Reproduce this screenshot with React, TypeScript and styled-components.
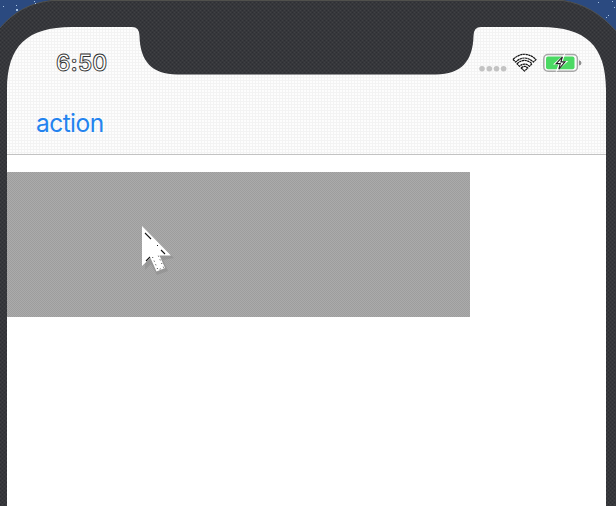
import React from "react";
import styled, { createGlobalStyle } from "styled-components";

const GlobalStyle = createGlobalStyle`
  * { box-sizing: border-box; }
  body {
    margin: 0;
    overflow: hidden;
    background: #fff;
    font-family: Inter, "Liberation Sans", sans-serif;
  }
`;

const Device = styled.div`
  position: relative;
  width: 616px;
  height: 506px;
  padding: 0 10px 0 7px;
  overflow: hidden;
  background: #35363a;
`;

const Screen = styled.main`
  display: flex;
  flex-direction: column;
  height: 506px;
  background: #fff;
`;

const Header = styled.header`
  flex: none;
  height: 155px;
  padding-top: 45px;
  border-bottom: 1px solid #c2c2c2;
  background-color: #f3f3f3;
  background-image: radial-gradient(circle at 1px 1px, #fdfdfd 0.8px, transparent 1.1px);
  background-size: 3px 3px;
`;

const StatusBar = styled.div`
  display: flex;
  align-items: center;
  justify-content: space-between;
  height: 36px;
  padding: 0 24px 0 49px;
`;

const Time = styled.time`
  font-size: 22.5px;
  line-height: 36px;
  font-weight: 600;
  letter-spacing: 0.2px;
  color: #fff;
  -webkit-text-stroke: 0.9px #333;
`;

const StatusIcons = styled.svg`
  display: block;
  width: 104px;
  height: 24px;
`;

const NavigationBar = styled.nav`
  display: flex;
  align-items: center;
  height: 73px;
  padding: 10px 29px 0;
`;

const ActionButton = styled.button`
  padding: 0;
  border: 0;
  background: none;
  color: #2383ef;
  font: 400 24.5px/30px Inter, "Liberation Sans", sans-serif;
  letter-spacing: -0.55px;
`;

const Content = styled.section`
  padding-top: 17px;
`;

const Block = styled.div`
  width: 463px;
  height: 145px;
  background: repeating-conic-gradient(#9d9d9d 0 25%, #ababab 0 50%) 0 0 / 2px 2px;
`;

const Bezel = styled.svg`
  position: absolute;
  inset: 0;
  pointer-events: none;
`;

const Pointer = styled.svg`
  position: absolute;
  left: 136px;
  top: 220px;
  pointer-events: none;
`;

const stars = [[3, 6, 1], [16, 9, 2], [16, 5, 1], [34, 1, 1], [35, 3, 1], [598, 2, 1], [612, 1, 1], [608, 15, 1], [606, 17, 1], [614, 7, 1]];

export default function App() {
  return (
    <Device>
      <GlobalStyle />
      <Screen>
        <Header>
          <StatusBar>
            <Time>6:50</Time>
            <StatusIcons viewBox="478 51 104 24" aria-label="Status">
              <g fill="#c3c3c3">
                {[482, 489.3, 496.5, 503.6].map((x) => <circle key={x} cx={x} cy="68.7" r="2.8" />)}
              </g>
              <g fill="#fff" stroke="#151515" strokeWidth="1.2" strokeDasharray="2.4 0.4" strokeLinejoin="round">
                <path d="M513 59.5 Q524.5 49 536 59.5 L533.4 62 Q524.5 54 515.6 62Z" />
                <path d="M517 63.8 Q524.5 57 532 63.8 L529.5 66.3 Q524.5 61.8 519.5 66.3Z" />
                <path d="M521.2 68 Q524.5 64.8 527.8 68 L524.5 71Z" />
              </g>
              <rect x="543.8" y="54.5" width="33.6" height="16.7" rx="4.2" fill="#fbfbfb" stroke="#a7a7a7" strokeWidth="1.5" />
              <rect x="546" y="56.5" width="28.5" height="12.8" rx="2" fill="#4bd963" />
              <path d="M579 60.3 Q581.5 61 581.5 63 Q581.5 65 579 65.6Z" fill="#8e8e8e" />
              <path d="M565.5 53 L553 64.5 H558.4 L555.5 72.5 L568.2 61 H562.8Z" fill="#fff" />
              <path d="M562.4 56.8 L556.2 63.6 H560.3 L558.8 69.2 L565 61.9 H560.9Z" fill="#fff" stroke="#202020" strokeWidth="1.1" />
            </StatusIcons>
          </StatusBar>
          <NavigationBar>
            <ActionButton>action</ActionButton>
          </NavigationBar>
        </Header>
        <Content><Block /></Content>
      </Screen>
      <Bezel width="616" height="506" viewBox="0 0 616 506" aria-hidden="true">
        <defs>
          <pattern id="grain" width="4" height="4" patternUnits="userSpaceOnUse">
            <path d="M0 0h4v4H0Z" fill="#36373b" />
            <path d="M0 0h1v1H0ZM2 2h1v1H2Z" fill="#2d2e33" />
            <path d="M2 0h1v1H2ZM0 2h1v1H0Z" fill="#404144" />
          </pattern>
        </defs>
        <path fill="url(#grain)" fillRule="evenodd" d="M0 0H616V506H0Z M7 506V90C7 46 27 27 72 27H132Q139.5 27 139.5 36C140 61 152 74.5 177 74.5H436C461 74.5 473 61 473.5 36Q473.5 27 481 27H541C586 27 606 46 606 90V506Z" />
        <path d="M0 0H52C29 3 14 12 0 28Z M563 0H616V31C600 13 584 4 563 0Z" fill="#2b4a80" />
        <path d="M0 28C14 12 29 3 52 .5H563C584 4 600 13 616 31" fill="none" stroke="#575750" strokeWidth=".8" />
        <g fill="#a9c5e2">
          {stars.map(([x, y, size]) => <rect key={`${x}-${y}`} x={x} y={y} width={size} height={size} />)}
        </g>
      </Bezel>
      <Pointer width="42" height="58" viewBox="136 220 42 58" aria-hidden="true">
        <path d="M145 230L174 258L163 260L168 271L157 275L151 264L145 270Z" fill="#858585" opacity=".45" />
        <path d="M142 226V266L150.5 258L156.5 271.5L165 268L159.5 255.5H171Z" fill="#fff" />
        <path d="M145 233L151 239M157 245.5h1M161 250L165 254M146 261L150 257" fill="none" stroke="#161616" strokeWidth="1.1" />
        <path d="M152.5 257L158 270L163.5 267.5L158 255" fill="none" stroke="#444" strokeWidth="1" strokeDasharray="1 3" />
      </Pointer>
    </Device>
  );
}
